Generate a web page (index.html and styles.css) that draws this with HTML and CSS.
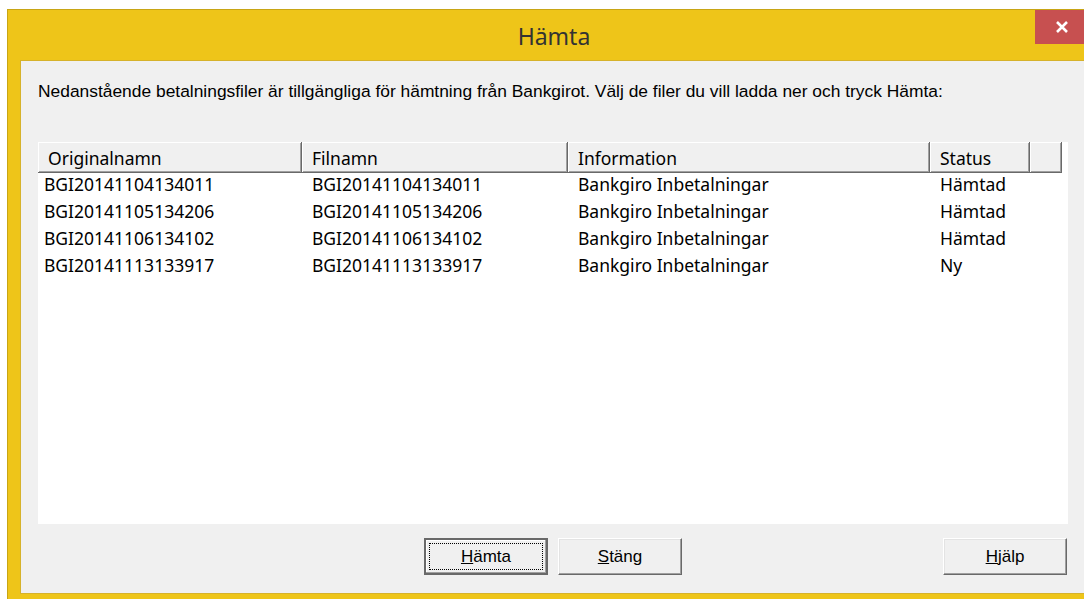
FILE: index.html
```html
<!DOCTYPE html>
<html lang="sv">
<head>
<meta charset="utf-8">
<title>Hämta</title>
<link rel="stylesheet" href="styles.css">
</head>
<body>
<div class="window">
  <div class="titlebar">
    <div class="title">Hämta</div>
    <div class="close" aria-label="Stäng">
      <svg width="14" height="14" viewBox="0 0 14 14"><path d="M2 2 L12 12 M12 2 L2 12" stroke="#fff" stroke-width="2.6" fill="none"/></svg>
    </div>
  </div>
  <div class="client">
    <p class="intro">Nedanstående betalningsfiler är tillgängliga för hämtning från Bankgirot. Välj de filer du vill ladda ner och tryck Hämta:</p>
    <div class="list">
      <div class="grid">
        <div class="hd first">Originalnamn</div>
        <div class="hd">Filnamn</div>
        <div class="hd">Information</div>
        <div class="hd">Status</div>
        <div class="hd filler"></div>

        <div class="cell first">BGI20141104134011</div>
        <div class="cell">BGI20141104134011</div>
        <div class="cell">Bankgiro Inbetalningar</div>
        <div class="cell">Hämtad</div>
        <div class="cell"></div>

        <div class="cell first">BGI20141105134206</div>
        <div class="cell">BGI20141105134206</div>
        <div class="cell">Bankgiro Inbetalningar</div>
        <div class="cell">Hämtad</div>
        <div class="cell"></div>

        <div class="cell first">BGI20141106134102</div>
        <div class="cell">BGI20141106134102</div>
        <div class="cell">Bankgiro Inbetalningar</div>
        <div class="cell">Hämtad</div>
        <div class="cell"></div>

        <div class="cell first">BGI20141113133917</div>
        <div class="cell">BGI20141113133917</div>
        <div class="cell">Bankgiro Inbetalningar</div>
        <div class="cell">Ny</div>
        <div class="cell"></div>
      </div>
    </div>
    <div class="buttons">
      <div class="group">
        <button class="btn default"><span class="focus"><u>H</u>ämta</span></button>
        <button class="btn"><u>S</u>täng</button>
      </div>
      <button class="btn help"><u>H</u>jälp</button>
    </div>
  </div>
</div>
</body>
</html>
```
FILE: styles.css
```css
* { box-sizing: border-box; }

html, body {
  margin: 0;
  height: 599px;
  overflow: hidden;
  background: #fff;
}

.window {
  margin: 9px 0 0 7px;
  width: 1094px;
  height: 600px;
  border: 1px solid #c8a515;
  background: #eec519;
  display: flex;
  flex-direction: column;
}

.titlebar {
  height: 50px;
  flex: none;
  display: grid;
  grid-template-columns: 1fr auto 1fr;
}

.title {
  grid-column: 2;
  align-self: center;
  margin-top: 2px;
  font-family: "Noto Sans", "Open Sans", sans-serif;
  font-size: 23px;
  color: #333;
}

.close {
  grid-column: 3;
  justify-self: end;
  align-self: start;
  width: 54px;
  height: 34px;
  margin-right: 11px;
  background: #c75050;
  display: flex;
  align-items: center;
  justify-content: center;
}

.client {
  margin: 0 14px 0 12px;
  height: 534px;
  border: 1px solid #d6b22a;
  background: #f0f0f0;
  padding: 0 17px;
  display: flex;
  flex-direction: column;
}

.intro {
  margin: 21px 0 0;
  font-family: "Liberation Sans", Arial, sans-serif;
  font-size: 17.4px;
  line-height: 18px;
  color: #000;
  white-space: nowrap;
}

.list {
  margin-top: 42px;
  width: 1030px;
  height: 382px;
  background: #fff;
  flex: none;
}

.grid {
  display: grid;
  grid-template-columns: 264px 266px 362px 100px 32px;
  grid-auto-rows: 27px;
  font-family: "Noto Sans", "Open Sans", sans-serif;
  font-size: 17.5px;
  color: #000;
}

.grid .hd {
  height: 31px;
  padding: 4px 0 0 10px;
  background: #f0f0f0;
  border-right: 1px solid #696969;
  border-bottom: 1px solid #696969;
  box-shadow: inset 1px 1px 0 #fff, inset -1px -1px 0 #a0a0a0;
  color: #000;
  line-height: 24px;
  white-space: nowrap;
}

.grid .hd.filler { padding: 0; }

.cell {
  padding-left: 10px;
  line-height: 27px;
  padding-top: 2px;
  white-space: nowrap;
}

.cell.first { padding-left: 6px; }

.buttons {
  margin-top: 14px;
  display: grid;
  grid-template-columns: 1fr auto 1fr;
  align-items: start;
}

.group {
  grid-column: 2;
  display: flex;
  gap: 10px;
}

.btn {
  width: 124px;
  height: 37px;
  padding: 0;
  margin: 0;
  background: #f0f0f0;
  border: 1px solid;
  border-color: #fff #696969 #696969 #fff;
  box-shadow: inset -1px -1px 0 #a0a0a0, inset 1px 1px 0 #e3e3e3;
  font-family: "Liberation Sans", Arial, sans-serif;
  font-size: 17px;
  color: #000;
  display: flex;
  align-items: center;
  justify-content: center;
}

.btn.default {
  border: 2px solid #696969;
  box-shadow: inset -1px -1px 0 #a0a0a0, inset 1px 1px 0 #fff;
  padding: 3px;
}

.btn .focus {
  flex: 1;
  align-self: stretch;
  border: 1px dotted #000;
  display: flex;
  align-items: center;
  justify-content: center;
}

.btn.help {
  grid-column: 3;
  justify-self: end;
  margin-right: 1px;
}
```
